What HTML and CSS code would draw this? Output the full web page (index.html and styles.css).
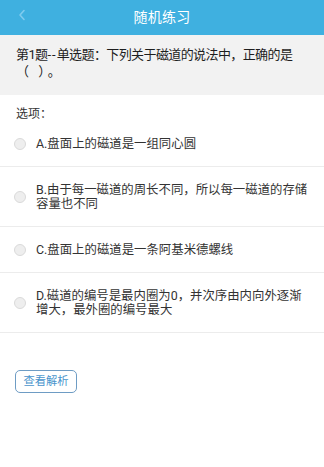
FILE: index.html
```html
<!DOCTYPE html>
<html lang="zh-CN">
<head>
<meta charset="utf-8">
<link rel="stylesheet" href="styles.css">
</head>
<body>
<div class="page">
  <header class="topbar">
    <svg class="back" width="8" height="12" viewBox="0 0 8 12"><polyline points="6,1.5 2,6 6,10.5" fill="none" stroke="#7fcbee" stroke-width="1.6" stroke-linecap="round" stroke-linejoin="round"/></svg>
    <h1 class="title">随机练习</h1>
  </header>
  <section class="question">第1题<span class="dash">--</span>单选题：下列关于磁道的说法中，正确的是<span class="blank">（ ）。</span></section>
  <section class="options">
    <div class="label">选项：</div>
    <div class="opt"><span class="radio"></span><span class="opt-text">A.盘面上的磁道是一组同心圆</span></div>
    <div class="opt"><span class="radio"></span><span class="opt-text">B.由于每一磁道的周长不同，所以每一磁道的存储容量也不同</span></div>
    <div class="opt"><span class="radio"></span><span class="opt-text">C.盘面上的磁道是一条阿基米德螺线</span></div>
    <div class="opt"><span class="radio"></span><span class="opt-text">D.磁道的编号是最内圈为0，并次序由内向外逐渐增大，最外圈的编号最大</span></div>
  </section>
  <div class="actions"><button class="btn">查看解析</button></div>
</div>
</body>
</html>
```

FILE: styles.css
```css
html, body {
  margin: 0;
  padding: 0;
  background: #ffffff;
}
body {
  font-family: Roboto, "Noto Sans CJK SC", sans-serif;
  width: 324px;
  height: 467px;
  overflow: hidden;
}
.page {
  display: flex;
  flex-direction: column;
}
.topbar {
  position: relative;
  height: 35px;
  background: #3fb0e0;
  display: flex;
  align-items: center;
  justify-content: center;
}
.back {
  position: absolute;
  left: 18px;
  top: 9px;
}
.title {
  margin: 0;
  font-size: 14px;
  font-weight: normal;
  color: #ffffff;
  line-height: 35px;
  letter-spacing: 0.3px;
}
.question {
  background: #f2f2f2;
  padding: 11px 14px 15px 16px;
  font-size: 13px;
  letter-spacing: -0.6px;
  line-height: 17px;
  color: #1e1e1e;
}
.dash {
  letter-spacing: 1px;
}
.blank {
  white-space: nowrap;
  letter-spacing: 3px;
}
.options {
  display: flex;
  flex-direction: column;
}
.label {
  padding: 12px 16px 0 16px;
  font-size: 12px;
  line-height: 14px;
  color: #333333;
}
.opt {
  display: flex;
  align-items: center;
  padding: 16px 14px 15px 14px;
  border-bottom: 1px solid #ececec;
}
.radio {
  flex: none;
  width: 10px;
  height: 10px;
  border-radius: 50%;
  border: 1px solid #dadada;
  background: #eeeeee;
  margin-right: 10px;
}
.opt-text {
  font-size: 12.4px;
  line-height: 14px;
  color: #333333;
}
.actions {
  padding: 37px 15px 0 15px;
}
.btn {
  font-family: Roboto, "Noto Sans CJK SC", sans-serif;
  font-size: 11.3px;
  color: #4a94cc;
  background: #ffffff;
  border: 1px solid #6e9cc4;
  border-radius: 5px;
  height: 23px;
  width: 62px;
  padding: 0;
  line-height: 21px;
}
```
